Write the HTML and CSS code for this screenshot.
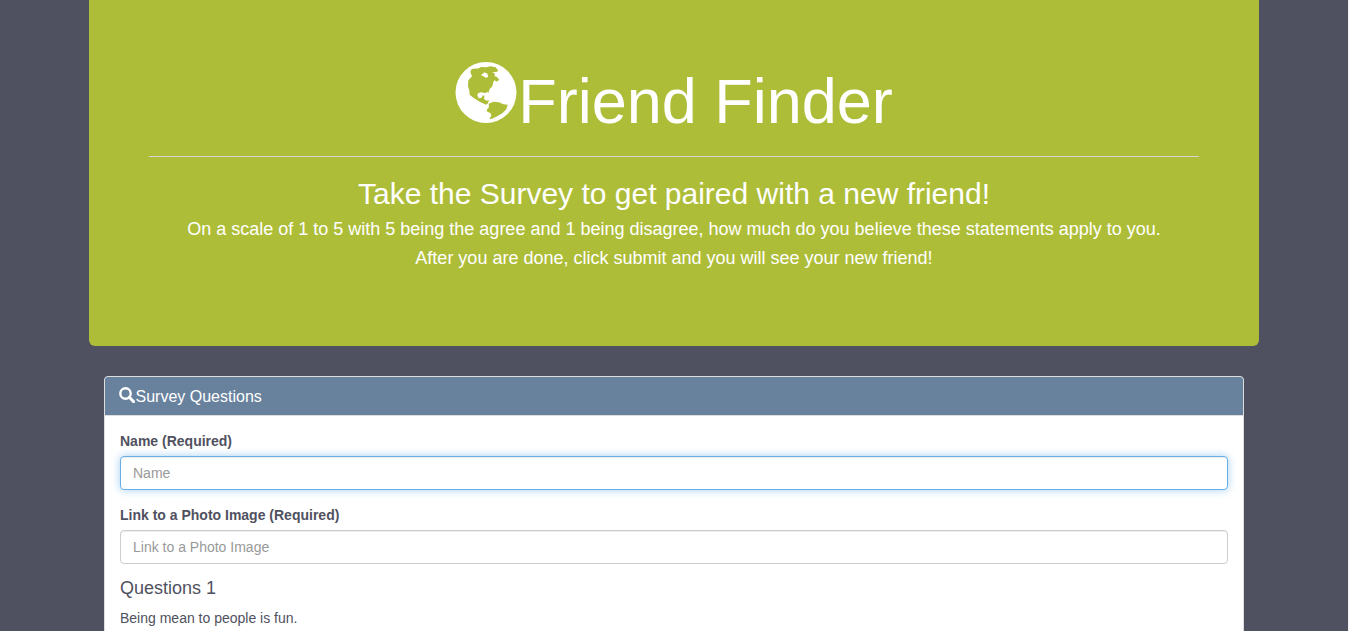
FILE: index.html
```html
<!DOCTYPE html>
<html lang="en">
<head>
<meta charset="utf-8">
<title>Friend Finder</title>
<link rel="stylesheet" href="styles.css">
</head>
<body>
<div class="page">
  <div class="container">
    <header class="jumbotron">
      <h1><svg class="globe" viewBox="47 36 184 183" aria-hidden="true"><circle cx="139" cy="127.500" r="91.500" fill="#fff"/><path fill="#aebd38" d="M92 66L96 57 118 55 123 51 140 52 152 49 168 52 176 62 170 66 157 66 165 70 165 79 172 81 179 90 170 95 164 90 161 97 158 109 150 117 146 129 143 125 137 130 133 128 124 127 115 130 113 136 117 145 126 143 130 135 134 139 133 147 141 152 148 151 145 160 139 164 120 155 101 143 90 134 89 122 85 109 86 91 97 79ZM147 161L161 155 178 157 191 163 204 164 200 178 188 190 170 200 157 206 149 207 155 197 153 190 141 184 143 176 148 172Z"/><path fill="#fff" d="M124 75L136 66 137 70 142 69 146 81 138 83 131 79Z"/></svg>Friend Finder</h1>
      <hr>
      <h2>Take the Survey to get paired with a new friend!</h2>
      <p>On a scale of 1 to 5 with 5 being the agree and 1 being disagree, how much do you believe these statements apply to you.</p>
      <p>After you are done, click submit and you will see your new friend!</p>
    </header>
    <main class="content">
      <section class="panel">
        <div class="panel-heading">
          <h3><svg class="search" viewBox="0 0 16 16" aria-hidden="true"><circle cx="6.500" cy="6.500" r="5.200" fill="none" stroke="#fff" stroke-width="2.400"/><path d="M10.300 10.300L14.600 14.600" stroke="#fff" stroke-width="3" stroke-linecap="round"/></svg>Survey Questions</h3>
        </div>
        <form class="panel-body">
          <label for="name">Name (Required)</label>
          <input class="field field-active" id="name" type="text" placeholder="Name">
          <label for="photo">Link to a Photo Image (Required)</label>
          <input class="field" id="photo" type="text" placeholder="Link to a Photo Image">
          <h4>Questions 1</h4>
          <p class="statement">Being mean to people is fun.</p>
        </form>
      </section>
    </main>
  </div>
</div>
</body>
</html>
```
FILE: styles.css
```css
* { box-sizing: border-box; }
html { background: #f1f1f5; overflow: hidden; }
body {
  margin: 0;
  font-family: "Liberation Sans", Arial, sans-serif;
  font-size: 14px;
  line-height: 20px;
  color: #505160;
}
.page { width: 1348px; height: 631px; overflow: hidden; background: #505160; }
.container { width: 1170px; margin: 0 auto; }
h1, h2, h3, h4, p { margin: 0; font-weight: 400; }
.jumbotron {
  height: 346px;
  padding: 62px 60px 48px;
  border-radius: 0 0 6px 6px;
  background: #aebd38;
  color: #fff;
  text-align: center;
}
.jumbotron h1 { height: 74px; font-size: 63px; line-height: 69px; white-space: nowrap; }
.globe { width: 62px; height: 61px; margin-right: 1px; vertical-align: baseline; }
hr { height: 1px; margin: 20px 0; border: 0; background: #d5d5d5; }
.jumbotron h2 { font-size: 30px; line-height: 33px; margin-bottom: 5px; }
.jumbotron p { font-size: 18px; line-height: 29px; }
.content { padding: 30px 15px 0; }
.panel { height: 400px; border: 1px solid #ddd; border-radius: 4px; background: #fff; }
.panel-heading {
  height: 39px;
  padding: 10px 14px;
  border-bottom: 1px solid #ddd;
  border-radius: 3px 3px 0 0;
  background: #68829e;
  color: #fff;
}
.panel-heading h3 { display: flex; font-size: 16px; line-height: 20px; }
.search { width: 16px; height: 16px; margin-right: 0.5px; }
.panel-body { padding: 15px; }
.panel-body label { display: block; margin-bottom: 5px; font-weight: 700; }
.field {
  display: block;
  width: 100%;
  height: 34px;
  margin: 0 0 15px;
  padding: 6px 12px;
  border: 1px solid #ccc;
  border-radius: 4px;
  background: #fff;
  box-shadow: inset 0 1px 1px rgba(0, 0, 0, .075);
  font: inherit;
  outline: 0;
}
.field::placeholder { color: #999; opacity: 1; }
.field-active {
  border-color: #66afe9;
  box-shadow: inset 0 1px 1px rgba(0, 0, 0, .075), 0 0 8px rgba(102, 175, 233, .6);
}
.panel-body h4 { margin: -1px 0 10px; font-size: 18px; line-height: 20px; }
```
